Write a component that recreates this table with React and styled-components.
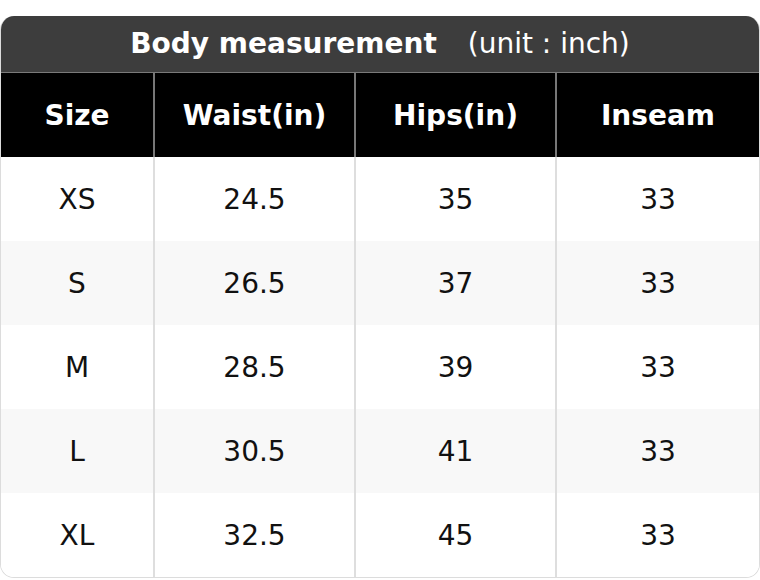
import React from "react";
import styled, { createGlobalStyle } from "styled-components";

const GlobalStyle = createGlobalStyle`
  html, body {
    margin: 0;
    padding: 0;
    background: #ffffff;
  }
  body {
    font-family: "DejaVu Sans", "Liberation Sans", sans-serif;
  }
`;

const Page = styled.div`
  padding-top: 16px;
  width: 760px;
`;

const Card = styled.div`
  border: 1px solid #dcdcdc;
  border-top: none;
  border-radius: 14px;
  overflow: hidden;
  background: #ffffff;
`;

const Title = styled.div`
  height: 57px;
  background: #3d3d3d;
  border-bottom: 1px solid #7a7a7a;
  display: flex;
  align-items: center;
  justify-content: center;
  color: #ffffff;
  font-size: 28px;
  padding-bottom: 2px;
  box-sizing: border-box;
`;

const TitleMain = styled.span`
  font-weight: bold;
`;

const Unit = styled.span`
  margin-left: 31px;
  font-weight: normal;
`;

const Grid = styled.div`
  display: grid;
  grid-template-columns: 152px 201px 201px 1fr;
`;

const HeadCell = styled.div`
  height: 84px;
  background: #000000;
  color: #ffffff;
  font-weight: bold;
  font-size: 28px;
  display: flex;
  align-items: center;
  justify-content: center;
  border-left: ${(p) => (p.$first ? "none" : "2px solid #777777")};
`;

const Cell = styled.div`
  height: 84px;
  background: ${(p) => (p.$alt ? "#f8f8f8" : "#ffffff")};
  color: #111111;
  font-size: 28px;
  display: flex;
  align-items: center;
  justify-content: center;
  border-left: ${(p) => (p.$first ? "none" : "2px solid #dedede")};
`;

const headers = ["Size", "Waist(in)", "Hips(in)", "Inseam"];

const rows = [
  ["XS", "24.5", "35", "33"],
  ["S", "26.5", "37", "33"],
  ["M", "28.5", "39", "33"],
  ["L", "30.5", "41", "33"],
  ["XL", "32.5", "45", "33"],
];

export default function App() {
  return (
    <>
      <GlobalStyle />
      <Page>
        <Card>
          <Title>
            <TitleMain>Body measurement</TitleMain>
            <Unit>(unit : inch)</Unit>
          </Title>
          <Grid>
            {headers.map((h, i) => (
              <HeadCell key={h} $first={i === 0}>
                {h}
              </HeadCell>
            ))}
            {rows.map((row, r) =>
              row.map((v, i) => (
                <Cell key={r + "-" + i} $first={i === 0} $alt={r % 2 === 1}>
                  {v}
                </Cell>
              ))
            )}
          </Grid>
        </Card>
      </Page>
    </>
  );
}
